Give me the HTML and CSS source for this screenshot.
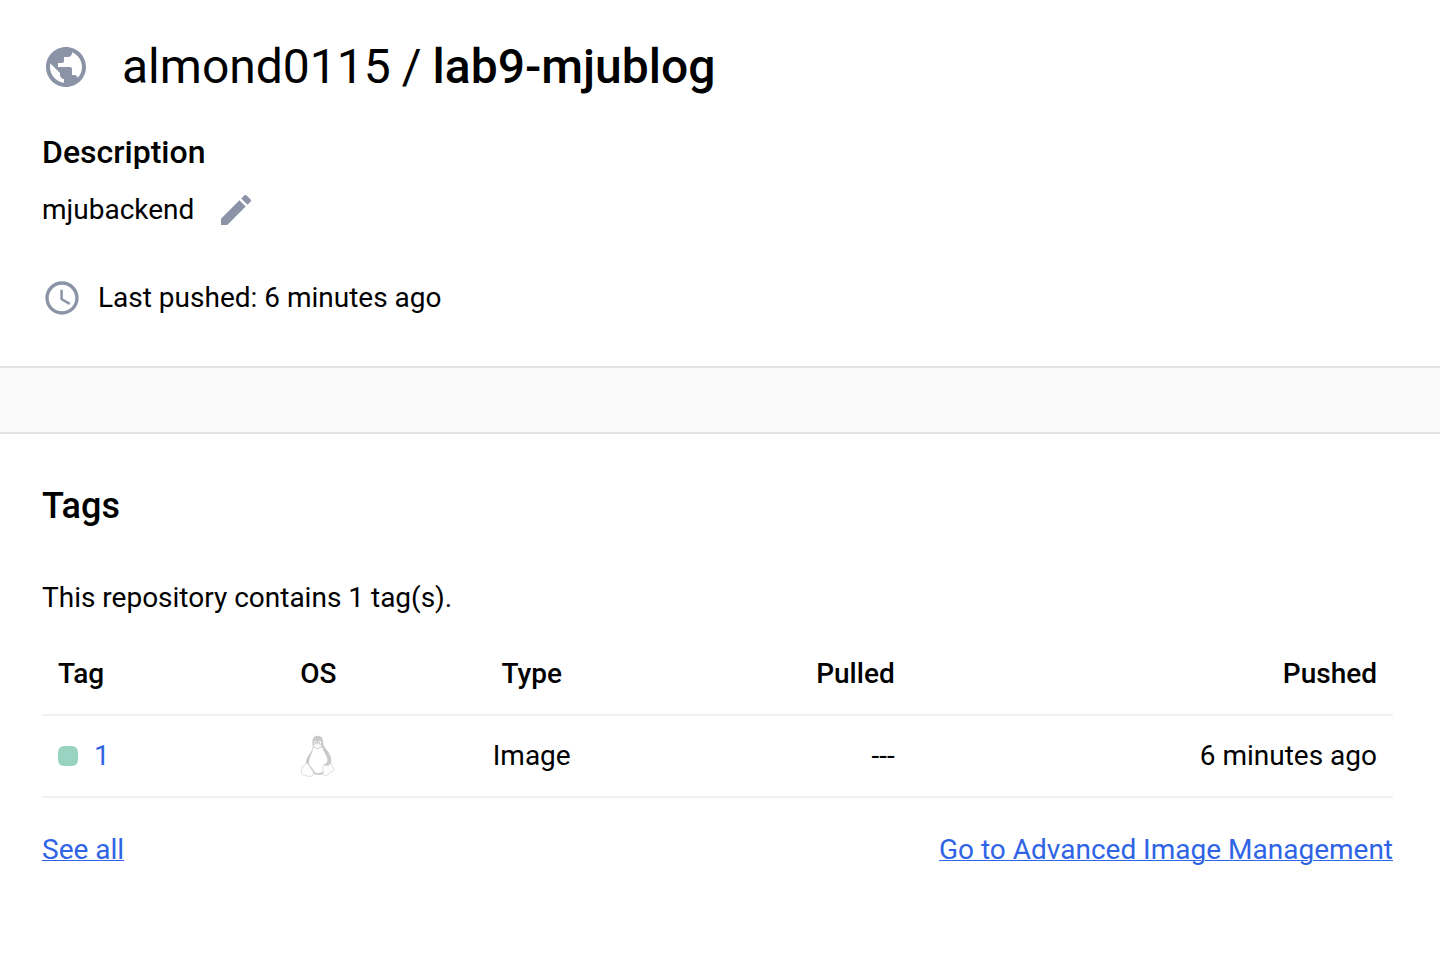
FILE: index.html
```html
<!DOCTYPE html>
<html lang="en">
<head>
<meta charset="utf-8">
<meta name="viewport" content="width=device-width, initial-scale=1">
<title>almond0115/lab9-mjublog</title>
<link rel="stylesheet" href="styles.css">
</head>
<body>
<main>
  <header class="summary">
    <div class="repo">
      <svg class="icon icon-globe" viewBox="0 0 24 24" aria-hidden="true"><path d="M12 2C6.480 2 2 6.480 2 12s4.480 10 10 10 10-4.480 10-10S17.520 2 12 2zm-1 17.930c-3.950-.490-7-3.850-7-7.930 0-.620.080-1.210.210-1.790L9 15v1c0 1.100.9 2 2 2v1.930zm6.900-2.540c-.260-.810-1-1.390-1.900-1.390h-1v-3c0-.550-.450-1-1-1H8v-2h2c.550 0 1-.450 1-1V7h2c1.100 0 2-.9 2-2v-.410c2.930 1.190 5 4.060 5 7.410 0 2.080-.8 3.970-2.100 5.390z"/></svg>
      <h1 class="repo-name"><span>almond0115</span><span>/</span><strong class="repo-image">lab9-mjublog</strong></h1>
    </div>
    <h2 class="label">Description</h2>
    <div class="description">
      <p>mjubackend</p>
      <button class="edit" type="button" aria-label="Edit description">
        <svg class="icon" viewBox="0 0 24 24" aria-hidden="true"><path d="M3 17.250V21h3.750L17.810 9.940l-3.750-3.750L3 17.250zM20.710 7.040c.390-.390.390-1.020 0-1.410l-2.340-2.340c-.390-.390-1.020-.390-1.410 0l-1.830 1.830 3.750 3.750 1.830-1.830z"/></svg>
      </button>
    </div>
    <div class="pushed">
      <svg class="icon" viewBox="0 0 24 24" aria-hidden="true"><path d="M11.990 2C6.470 2 2 6.480 2 12s4.470 10 9.990 10C17.520 22 22 17.520 22 12S17.520 2 11.990 2zM12 20c-4.420 0-8-3.580-8-8s3.580-8 8-8 8 3.580 8 8-3.580 8-8 8zm.5-13H11v6l5.250 3.150.750-1.230-4.500-2.670z"/></svg>
      <p>Last pushed: 6 minutes ago</p>
    </div>
  </header>
  <div class="divider"></div>
  <section class="tags">
    <h2 class="section-title">Tags</h2>
    <p>This repository contains 1 tag(s).</p>
    <table class="tag-table">
      <thead>
        <tr>
          <th class="col-tag" scope="col">Tag</th>
          <th class="col-os" scope="col">OS</th>
          <th class="col-type" scope="col">Type</th>
          <th class="col-pulled" scope="col">Pulled</th>
          <th class="col-pushed" scope="col">Pushed</th>
        </tr>
      </thead>
      <tbody>
        <tr>
          <td class="col-tag"><div class="tag"><span class="status"></span><a class="tag-link" href="#tag-1">1</a></div></td>
          <td class="col-os">
            <svg class="tux" viewBox="0 0 102 126" role="img" aria-label="Linux">
              <path fill="#c9c9c9" d="M50 2c-10 0-16 7-16 17 0 8 2 14 0 22-3 10-12 19-17 31-3 7-4 14-2 20l18 20c5 5 8 7 14 7h14c6 0 8-3 10-8l16-18c6-13 5-25-3-39-6-9-15-17-17-26 0-14-3-26-17-26z"/>
              <path fill="#fff" d="M37 35c6 8 18 8 26 1 3 12 13 22 16 35 1 6 0 10-4 14l-7 6-3 20c-7 4-17 4-24 1-3-8-10-15-17-25-1-18 11-32 13-52z"/>
              <ellipse cx="43" cy="22" rx="4" ry="5" fill="#f7f7f7"/><ellipse cx="56" cy="22" rx="5" ry="5" fill="#f7f7f7"/>
              <circle cx="44" cy="23" r="2" fill="#aaa"/><circle cx="55" cy="23" r="2" fill="#aaa"/>
              <path fill="#fafafa" stroke="#d6d6d6" stroke-width="1.500" d="M37 31c6-6 14-7 26 0-3 6-9 9-14 9s-10-4-12-9z"/>
              <path fill="#fdfdfd" stroke="#cfcfcf" stroke-width="2" stroke-linejoin="round" d="M16 84c5 0 8 7 13 15 4 7 10 13 8 18-1 6-7 8-14 7-7-2-14-4-19-5-5-1-1-8-2-13 0-7-1-11 4-13 5-1 5-7 10-9zM68 88c-5 4 0 15-2 25-1 9 8 12 15 6 5-5 11-8 17-12 5-4-1-7-4-12-2-5-1-9-5-11-3 8-15 11-21 4z"/>
            </svg>
          </td>
          <td class="col-type">Image</td>
          <td class="col-pulled">---</td>
          <td class="col-pushed">6 minutes ago</td>
        </tr>
      </tbody>
    </table>
    <nav class="links" aria-label="Tag links">
      <a href="#tags">See all</a>
      <a href="#manage">Go to Advanced Image Management</a>
    </nav>
  </section>
</main>
</body>
</html>
```
FILE: styles.css
```css
* { box-sizing: border-box; }

body {
  margin: 0;
  background: #fff;
  color: #000;
  font: 400 28px/40px Roboto, sans-serif;
}

h1, h2, p { margin: 0; }

a { color: #2f64e6; text-underline-offset: 1px; text-decoration-thickness: 1px; }

.icon {
  display: block;
  flex: none;
  width: 40px;
  height: 40px;
  fill: #8b93a6;
}

.icon-globe { width: 48px; height: 48px; }

.summary { padding: 34px 47px 48px 42px; }

.repo { display: flex; align-items: center; gap: 32px; }

.repo-name {
  display: flex;
  gap: 11px;
  font-size: 48px;
  font-weight: 400;
  line-height: 66px;
}

.repo-image { font-weight: 500; }

.label {
  margin-top: 32px;
  font-size: 32px;
  font-weight: 500;
  line-height: 40px;
}

.description {
  display: flex;
  align-items: center;
  gap: 22px;
  margin-top: 18px;
}

.edit {
  padding: 0;
  border: 0;
  background: none;
  cursor: pointer;
}

.pushed {
  display: flex;
  align-items: center;
  gap: 16px;
  margin-top: 48px;
}

.divider {
  height: 68px;
  border-top: 2px solid #e1e2e6;
  border-bottom: 2px solid #e1e2e6;
  background: #f9f9f9;
}

.tags { padding: 48px 47px 48px 42px; }

.section-title {
  margin-bottom: 48px;
  font-size: 36px;
  font-weight: 500;
  line-height: 48px;
}

.tag-table {
  width: 100%;
  margin-top: 16px;
  border-collapse: separate;
  border-spacing: 0;
  table-layout: fixed;
}

.tag-table th,
.tag-table td {
  height: 82px;
  padding: 0 16px;
  border-bottom: 2px solid #f2f2f2;
}

.tag-table th { font-weight: 500; }

.tag-table .col-tag { width: 15%; text-align: left; }
.tag-table .col-os { width: 10.9%; text-align: center; }
.tag-table .col-type { width: 20.7%; text-align: center; }
.tag-table .col-pulled { width: 17.7%; text-align: right; }
.tag-table .col-pushed { text-align: right; }

.tag { display: flex; align-items: center; gap: 16px; }

.tag-link { text-decoration: none; }

.status {
  width: 20px;
  height: 20px;
  border-radius: 6px;
  background: #99d4c2;
}

.tux {
  display: block;
  width: 34px;
  height: 42px;
  margin: 0 auto;
}

.links {
  display: flex;
  justify-content: space-between;
  margin-top: 32px;
}
```
